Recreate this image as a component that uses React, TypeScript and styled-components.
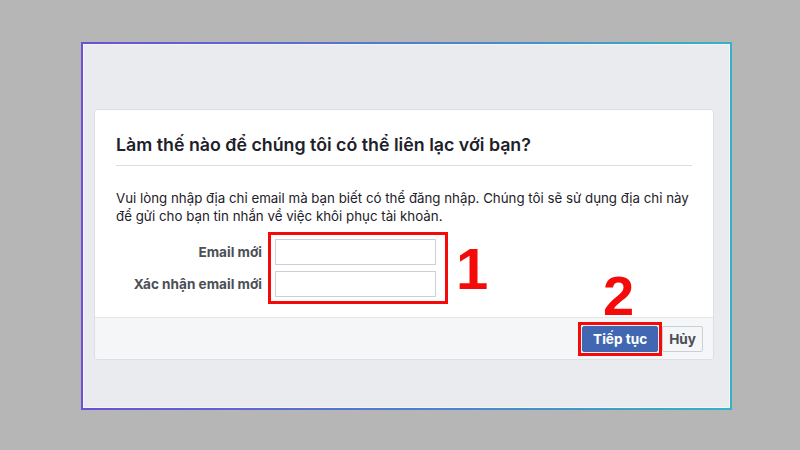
import styled, { createGlobalStyle } from 'styled-components';

const GlobalStyle = createGlobalStyle`
  html, body {
    margin: 0;
    padding: 0;
    background: #b6b6b6;
  }
  * {
    box-sizing: border-box;
  }
`;

const Page = styled.div`
  width: 800px;
  height: 450px;
  padding: 42px 0 0 81px;
  font-family: Inter, 'Liberation Sans', sans-serif;
  color: #1d2129;
`;

const Frame = styled.div`
  width: 651px;
  height: 368px;
  border: 2px solid transparent;
  border-image: linear-gradient(90deg, #6d4fd8, #4a86d0 60%, #35b3c4) 1;
  background: #e9ebee;
  box-shadow: inset 0 0 0 1px #f4f5f7;
  padding: 65px 0 0 11px;
`;

const Card = styled.div`
  position: relative;
  width: 620px;
  height: 251px;
  background: #fff;
  border: 1px solid #dddfe2;
  border-radius: 3px;
  display: flex;
  flex-direction: column;
`;

const Body = styled.div`
  flex: 1;
  padding: 0 21px;
`;

const Title = styled.h2`
  margin: 0;
  padding: 25px 0 10px;
  font-size: 17.8px;
  font-weight: 600;
  line-height: 20px;
  border-bottom: 1px solid #dadde1;
`;

const Text = styled.p`
  margin: 23px 0 0;
  font-size: 13.3px;
  line-height: 18px;
`;

const Form = styled.div`
  display: flex;
  align-items: flex-start;
  gap: 6px;
  margin-top: 7px;
`;

const Labels = styled.div`
  width: 146px;
  padding-top: 7px;
  display: flex;
  flex-direction: column;
  gap: 6px;
`;

const Label = styled.label`
  height: 26px;
  line-height: 26px;
  text-align: right;
  font-size: 13.6px;
  font-weight: 700;
  color: #4b4f56;
  white-space: nowrap;
`;

const Marked = styled.div<{ $pad: string }>`
  border: 3px solid #f50a0a;
  padding: ${(p) => p.$pad};
  display: flex;
  flex-direction: column;
  gap: 6px;
`;

const Input = styled.input`
  width: 161px;
  height: 26px;
  border: 1px solid #ccd0d5;
  border-radius: 0;
  outline: none;
  padding: 0 6px;
  font-size: 12px;
`;

const Step = styled.span<{ $size: number; $left: number; $top: number }>`
  position: absolute;
  left: ${(p) => p.$left}px;
  top: ${(p) => p.$top}px;
  font-family: 'Liberation Sans', Arial, sans-serif;
  font-weight: 700;
  font-size: ${(p) => p.$size}px;
  line-height: 1;
  color: #f50a0a;
`;

const Footer = styled.div`
  height: 42px;
  background: #f5f6f7;
  border-top: 1px solid #e5e5e5;
  border-radius: 0 0 3px 3px;
  display: flex;
  align-items: center;
  justify-content: flex-end;
  padding-right: 10px;
`;

const Button = styled.button<{ $primary?: boolean }>`
  height: 26px;
  padding: 0 ${(p) => (p.$primary ? 10 : 6)}px;
  font-family: inherit;
  font-size: 13.6px;
  font-weight: 700;
  border-radius: 2px;
  border: 1px solid ${(p) => (p.$primary ? '#4267b2' : '#ccd0d5')};
  background: ${(p) => (p.$primary ? '#4267b2' : '#f5f6f7')};
  color: ${(p) => (p.$primary ? '#fff' : '#4b4f56')};
  cursor: pointer;
`;

const App = () => {
  return (
    <Page>
      <GlobalStyle />
      <Frame>
        <Card>
          <Body>
            <Title>Làm thế nào để chúng tôi có thể liên lạc với bạn?</Title>
            <Text>
              Vui lòng nhập địa chỉ email mà bạn biết có thể đăng nhập. Chúng tôi sẽ sử dụng địa chỉ này
              để gửi cho bạn tin nhắn về việc khôi phục tài khoản.
            </Text>
            <Form>
              <Labels>
                <Label htmlFor='email'>Email mới</Label>
                <Label htmlFor='confirm'>Xác nhận email mới</Label>
              </Labels>
              <Marked $pad='4px 9px 4px 4px'>
                <Input id='email' type='email' />
                <Input id='confirm' type='email' />
              </Marked>
            </Form>
          </Body>
          <Footer>
            <Marked $pad='1px'>
              <Button $primary>Tiếp tục</Button>
            </Marked>
            <Button>Hủy</Button>
          </Footer>
          <Step $size={58} $left={361} $top={130}>1</Step>
          <Step $size={56} $left={508} $top={158}>2</Step>
        </Card>
      </Frame>
    </Page>
  );
};

export default App;
